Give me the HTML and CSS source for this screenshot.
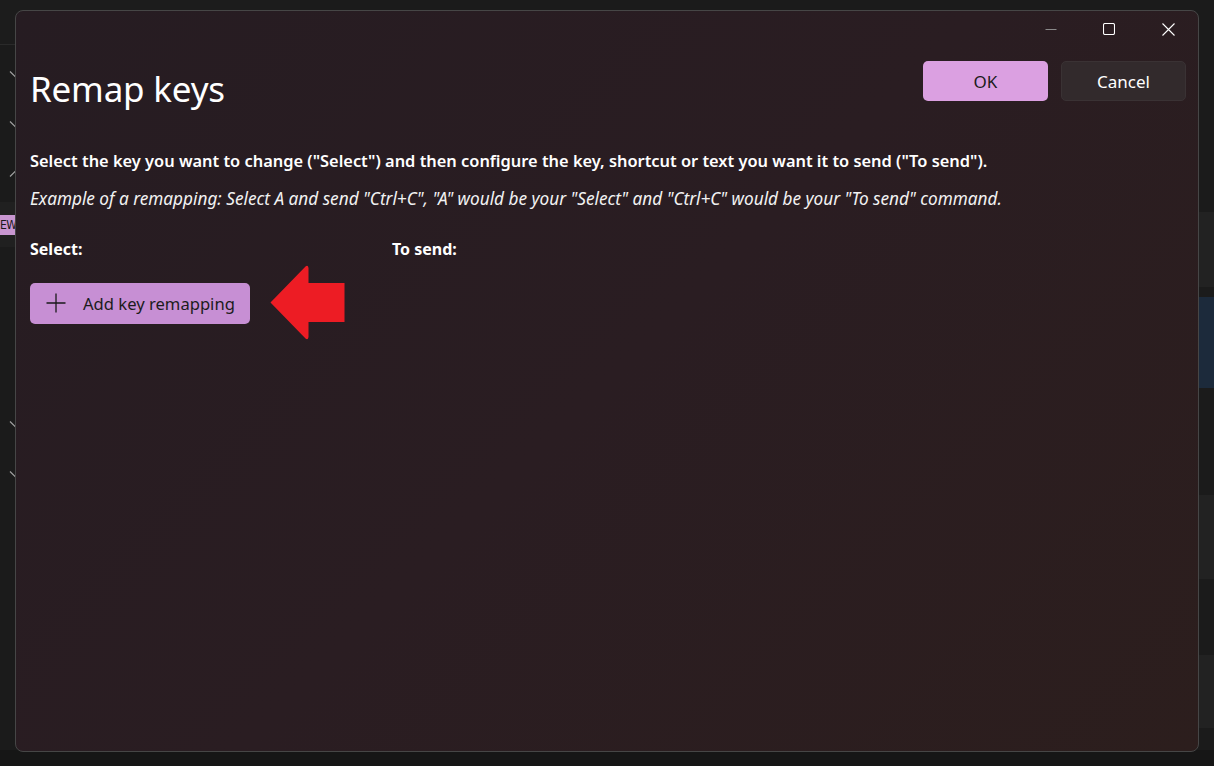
FILE: index.html
```html
<!DOCTYPE html>
<html lang="en">
<head>
<meta charset="utf-8">
<title>Remap keys</title>
<link rel="stylesheet" href="styles.css">
</head>
<body>
<div class="desktop">
  <div class="app">
    <aside class="nav">
      <div class="nav-top"></div>
      <div class="nav-item first"><svg class="chev" width="12" height="8" viewBox="0 0 12 8"><path d="M1 1.5L6 6.5L11 1.5" fill="none" stroke="#a0a0a0" stroke-width="1.2"/></svg></div>
      <div class="nav-item"><svg class="chev" width="12" height="8" viewBox="0 0 12 8"><path d="M1 1.5L6 6.5L11 1.5" fill="none" stroke="#a0a0a0" stroke-width="1.2"/></svg></div>
      <div class="nav-item"><svg class="chev" width="12" height="8" viewBox="0 0 12 8"><path d="M1 6.5L6 1.5L11 6.5" fill="none" stroke="#a0a0a0" stroke-width="1.2"/></svg></div>
      <div class="nav-row"><span class="badge">EW</span></div>
      <div class="nav-item gap"><svg class="chev" width="12" height="8" viewBox="0 0 12 8"><path d="M1 1.5L6 6.5L11 1.5" fill="none" stroke="#a0a0a0" stroke-width="1.2"/></svg></div>
      <div class="nav-item"><svg class="chev" width="12" height="8" viewBox="0 0 12 8"><path d="M1 1.5L6 6.5L11 1.5" fill="none" stroke="#a0a0a0" stroke-width="1.2"/></svg></div>
    </aside>
    <main class="list">
      <div class="row r1"></div>
      <div class="row r2"></div>
      <div class="row r3"></div>
      <div class="row r4"></div>
    </main>
  </div>

  <section class="dialog">
    <div class="titlebar">
      <div class="caption min"><svg width="12" height="12" viewBox="0 0 12 12"><path d="M0.5 6.5h11" stroke="#8a8a8a" stroke-width="1"/></svg></div>
      <div class="caption max"><svg width="12" height="12" viewBox="0 0 12 12"><rect x="0.5" y="0.5" width="11" height="11" rx="1.5" fill="none" stroke="#ffffff" stroke-width="1.1"/></svg></div>
      <div class="caption close"><svg width="13" height="13" viewBox="0 0 13 13"><path d="M0.5 0.5L12.5 12.5M12.5 0.5L0.5 12.5" stroke="#ffffff" stroke-width="1.1"/></svg></div>
    </div>
    <header class="header">
      <h1 class="title">Remap keys</h1>
      <div class="actions">
        <button class="btn btn-ok">OK</button>
        <button class="btn btn-cancel">Cancel</button>
      </div>
    </header>
    <p class="instr">Select the key you want to change ("Select") and then configure the key, shortcut or text you want it to send ("To send").</p>
    <p class="example">Example of a remapping: Select A and send "Ctrl+C", "A" would be your "Select" and "Ctrl+C" would be your "To send" command.</p>
    <div class="cols">
      <span class="col-select">Select:</span>
      <span class="col-send">To send:</span>
    </div>
    <div class="add-row">
      <button class="btn-add">
        <svg class="plus" width="20" height="20" viewBox="0 0 20 20"><path d="M10 0.5V19.5M0.5 10H19.5" stroke="#1a1a1a" stroke-width="1.3"/></svg>
        <span>Add key remapping</span>
      </button>
      <svg class="arrow" width="75" height="76" viewBox="0 0 75 76"><path d="M0.5 37.5 L35.5 1.5 Q38 -0.5 38.5 3 L38.5 18 L74.5 18 L74.5 57 L38.5 57 L38.5 72 Q38 75.5 35.5 73.5 Z" fill="#ed1c24"/></svg>
    </div>
  </section>
</div>
</body>
</html>
```

FILE: styles.css
```css
* { box-sizing: border-box; }
html, body { margin: 0; padding: 0; }
body {
  width: 1214px;
  height: 766px;
  overflow: hidden;
  background: #161616;
  font-family: "Noto Sans", "Open Sans", "Liberation Sans", sans-serif;
}
.desktop {
  position: relative;
  width: 1214px;
  height: 766px;
}
.app {
  display: flex;
  height: 750px;
  background: #1b1b1b;
}
.nav {
  width: 300px;
  display: flex;
  flex-direction: column;
  background: #1b1b1b;
}
.nav-top {
  height: 45px;
  border-bottom: 1px solid #2a2a2a;
  background: #1c1c1c;
  flex: none;
}
.nav-item {
  height: 50px;
  flex: none;
  display: flex;
  align-items: center;
  padding-left: 9px;
}
.nav-item.first { margin-top: 4px; }
.nav-item.gap { margin-top: 152px; }
.chev { display: block; }
.nav-row {
  height: 45px;
  flex: none;
  background: #202020;
  display: flex;
  align-items: center;
  margin-top: 3px;
}
.badge {
  display: block;
  background: #c896d0;
  color: #1a1a1a;
  font-family: "DejaVu Sans Condensed", "DejaVu Sans", sans-serif;
  font-size: 12px;
  height: 20px;
  line-height: 20px;
  padding: 0 4px 0 0;
  letter-spacing: -0.5px;
  white-space: nowrap;
}
.list {
  flex: 1;
  display: flex;
  flex-direction: column;
}
.row { flex: none; }
.r1 { margin-top: 212px; height: 75px; background: #222222; }
.r2 { margin-top: 10px; height: 91px; background: #1c2a3b; }
.r3 { margin-top: 107px; height: 84px; background: #222222; }
.r4 { margin-top: 76px; height: 73px; background: #222222; }

.dialog {
  position: absolute;
  left: 15px;
  top: 10px;
  width: 1184px;
  height: 742px;
  border: 1px solid #464646;
  border-radius: 8px;
  background: linear-gradient(135deg, #261c22 0%, #2a1d22 50%, #2c1e1d 100%);
  color: #ffffff;
  padding: 0 12px 0 14px;
  display: flex;
  flex-direction: column;
}
.titlebar {
  height: 36px;
  display: flex;
  justify-content: flex-end;
  margin-right: -12px;
  flex: none;
}
.caption {
  width: 58px;
  display: flex;
  align-items: center;
  justify-content: center;
}
.caption.close { width: 60px; }
.header {
  display: flex;
  justify-content: space-between;
  align-items: flex-start;
  margin-top: 14px;
  flex: none;
}
.title {
  margin: 4px 0 0 0;
  font-weight: 400;
  font-size: 35px;
  line-height: 48px;
  letter-spacing: -0.2px;
}
.actions {
  display: flex;
  gap: 13px;
}
.btn {
  width: 125px;
  height: 40px;
  border: none;
  border-radius: 5px;
  font-family: inherit;
  font-size: 17px;
}
.btn-ok { background: #dba0e1; color: #1c1c1c; }
.btn-cancel { background: #322a2c; color: #ffffff; border: 1px solid #3a3234; }
.instr {
  margin: 37px 0 0 0;
  font-size: 16.4px;
  font-weight: 600;
  line-height: 22px;
}
.example {
  margin: 16px 0 0 0;
  font-size: 17.2px;
  font-style: italic;
  line-height: 22px;
  color: #f2f2f2;
}
.cols {
  display: flex;
  margin-top: 28px;
  font-size: 16px;
  font-weight: 700;
  line-height: 22px;
}
.col-select { width: 362px; }
.add-row {
  display: flex;
  align-items: center;
  gap: 20px;
  margin-top: 5px;
}
.btn-add {
  display: flex;
  align-items: center;
  width: 220px;
  height: 41px;
  border: none;
  border-radius: 5px;
  background: #c78fd4;
  color: #1c1c1c;
  font-family: inherit;
  font-size: 16.6px;
  padding: 0 0 0 16px;
}
.plus { margin-right: 17px; flex: none; }
.arrow { flex: none; }
```
